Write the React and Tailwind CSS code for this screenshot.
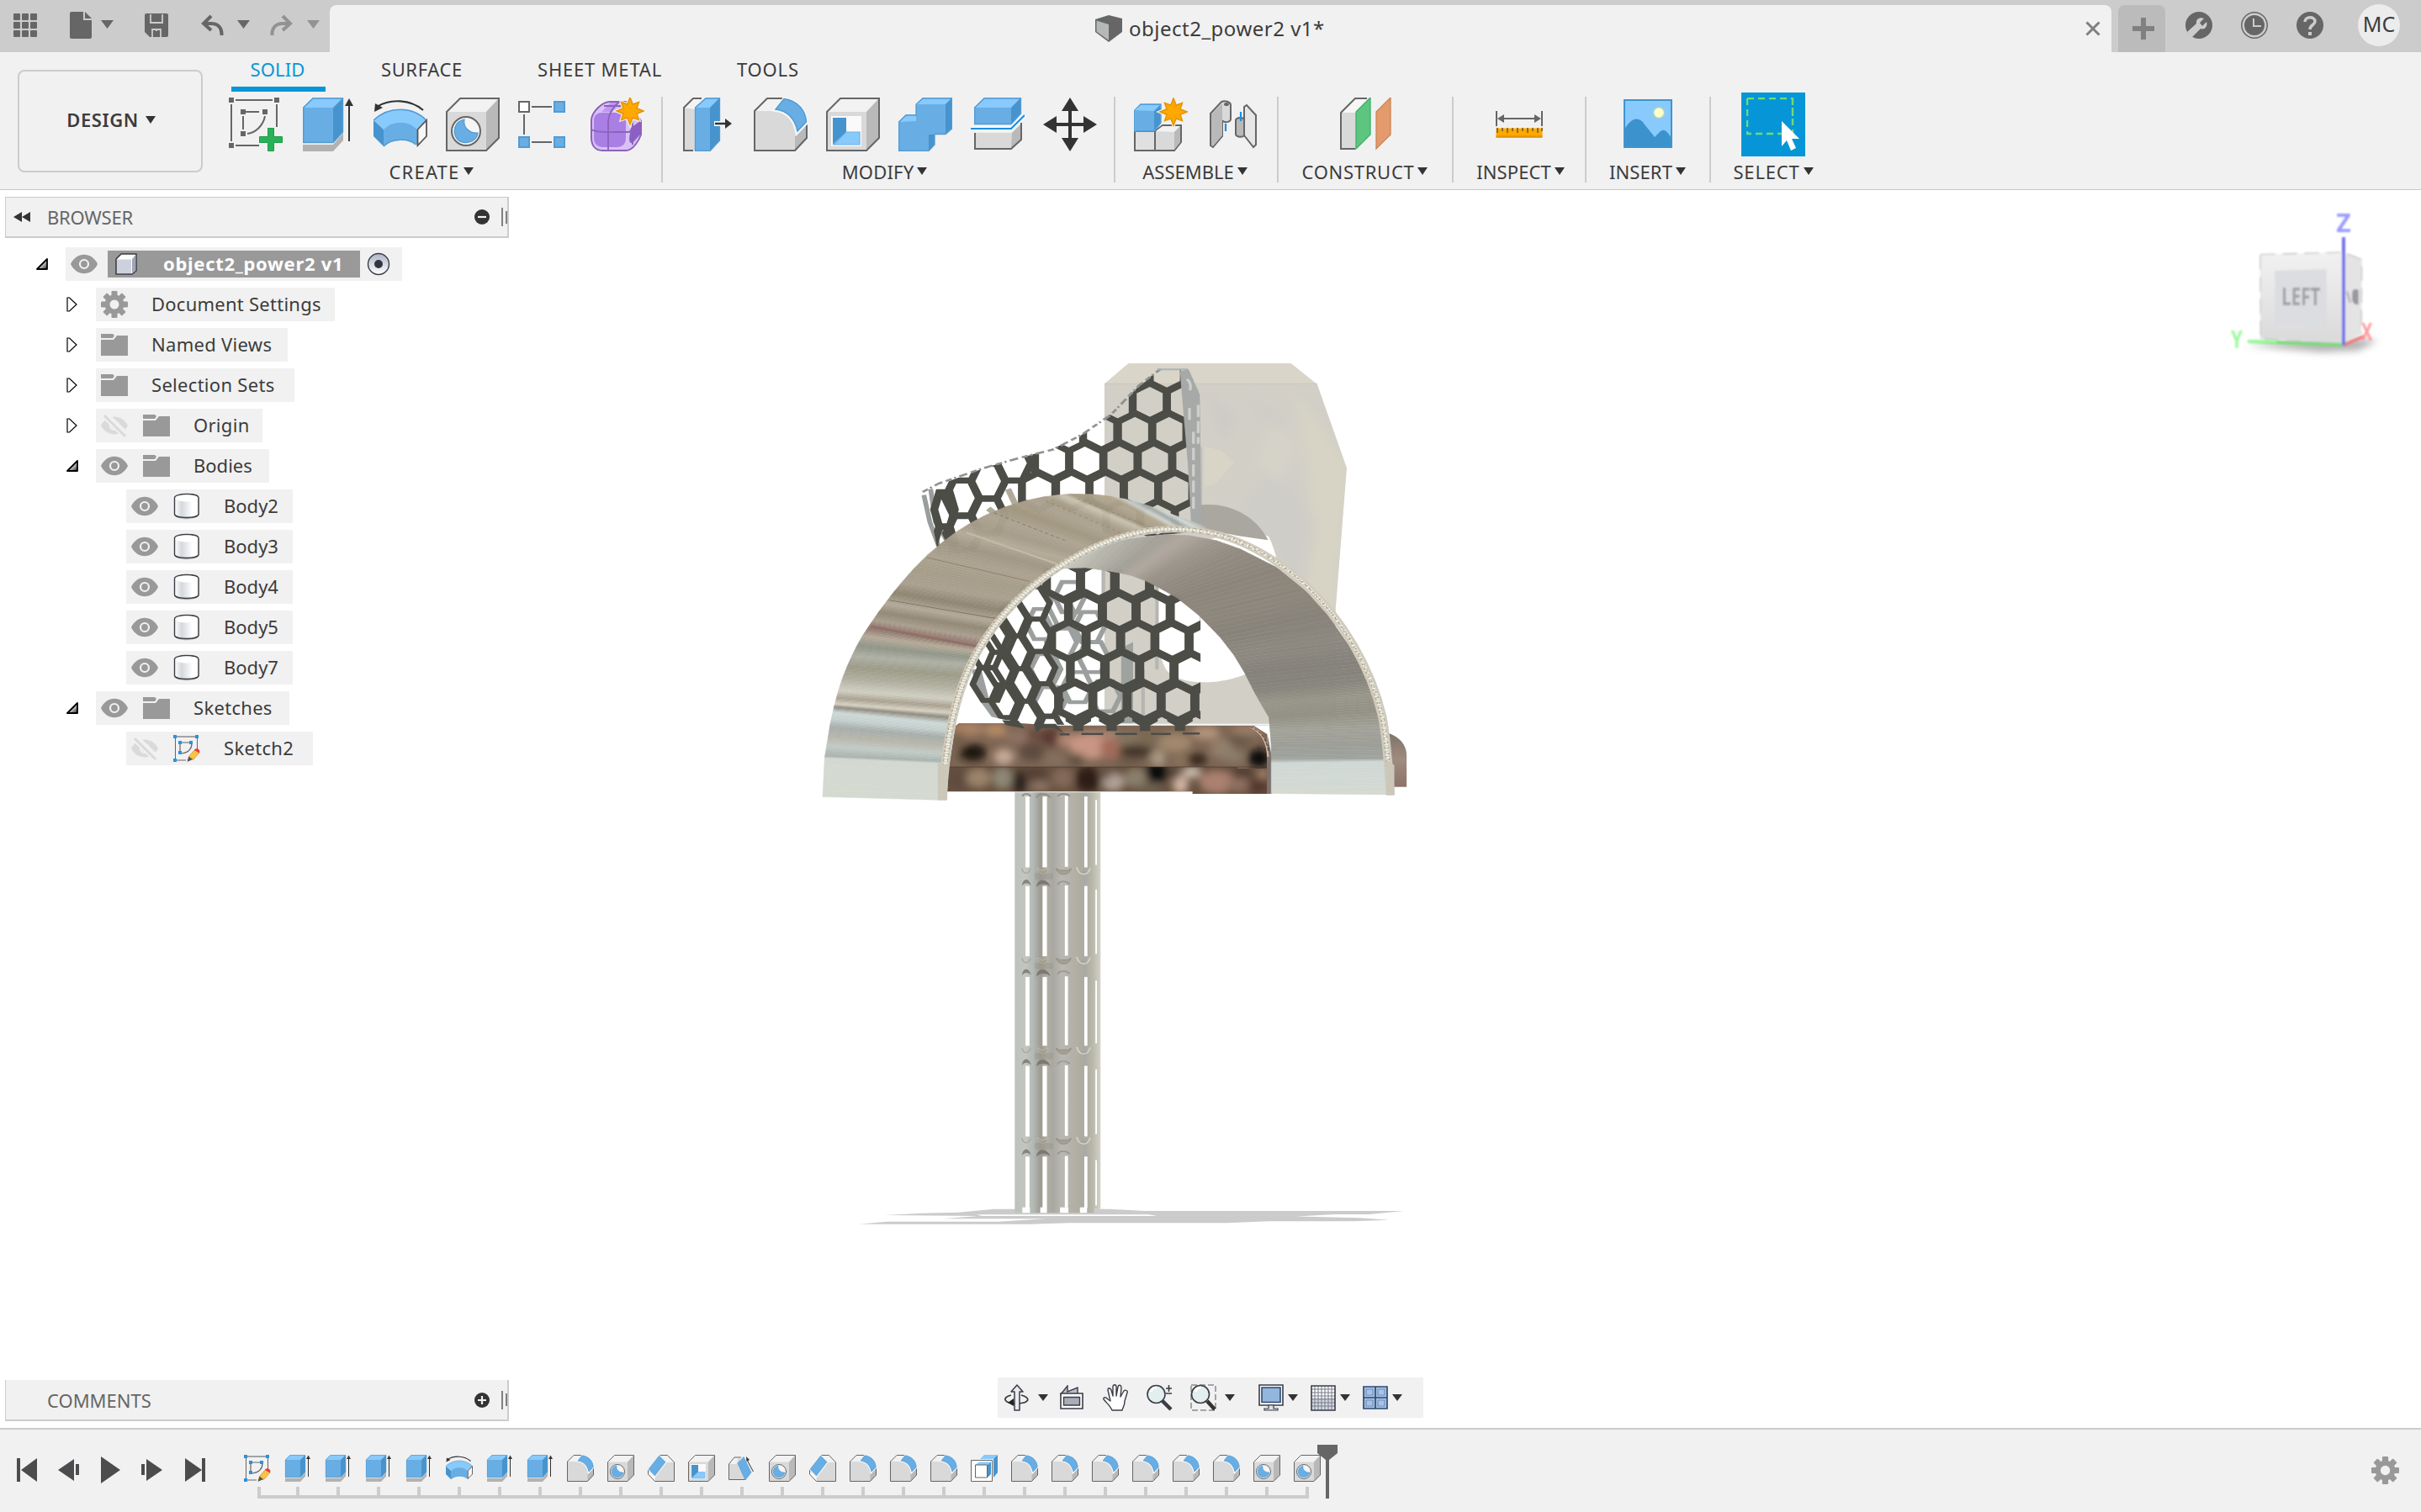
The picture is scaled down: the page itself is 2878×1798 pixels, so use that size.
import React from "react";

/* ---------- small shared pieces ---------- */

const Svg = ({ w = 64, h, vb, className = "", children }) => (
  <svg width={w} height={h ?? w} viewBox={vb ?? `0 0 ${w} ${h ?? w}`} className={"shrink-0 block " + className} fill="none">
    {children}
  </svg>
);

const Caret = ({ w = 12, h = 8, color = "#333", className = "" }) => (
  <svg width={w} height={h} viewBox="0 0 12 8" preserveAspectRatio="none" className={"shrink-0 block " + className}>
    <path d="M0 0H12L6 8Z" fill={color} />
  </svg>
);

const DARK = "#666";
const FRONT = "#d9d9d9";
const TOP = "#f2f2f2";
const SIDE = "#b9b9b9";

/* ---------- modelling icons, drawn on a 64 x 64 grid ---------- */

const Star = ({ x, y }) => (
  <g transform={`translate(${x} ${y})`}>
    <path d="M0-17 3.6-8.6 11-11 8.6-3.6 17 0 8.6 3.6 11 11 3.6 8.6 0 17-3.6 8.6-11 11-8.6 3.6-17 0-8.6-3.6-11-11-3.6-8.6Z" fill="#f1f1f1" stroke="#f1f1f1" strokeWidth="3" />
    <path d="M0-16 3.2-8 10.5-10.5 8-3.2 16 0 8 3.2 10.5 10.5 3.2 8 0 16-3.2 8-10.5 10.5-8 3.2-16 0-8-3.2-10.5-10.5-3.2-8Z" fill="#ffa800" stroke="#e59400" strokeWidth="1.5" />
  </g>
);

const SketchNew = () => (
  <>
    <g stroke={DARK} strokeWidth="2">
      <path d="M8 3H52M3 8V52M57 8V35M8 57H36M20 17H36M17 22V38" />
      <path d="M43 22C41 33 32 42 22 43" />
    </g>
    <path d="M0 0h6v6H0zM54 0h6v6h-6zM0 54h6v6H0zM14 14h6v6h-6zM40 14h6v6h-6zM14 40h6v6h-6z" fill={DARK} />
    <path d="M46.500 36.500h7v10h10v7h-10v10h-7v-10h-10v-7h10z" fill="#27b257" stroke="#1f9c49" />
  </>
);

const SketchEdit = () => (
  <>
    <path d="M6 4H52" stroke="#a3a3a3" strokeWidth="4" />
    <path d="M5 8V58M6 60H30M57 8V34" stroke={DARK} strokeWidth="2" />
    <path d="M20 18H42M16 20V42M44 20C44 34 34 42 20 44" stroke={DARK} strokeWidth="2.400" />
    <path d="M0 0h8v8H0zM52 0h8v8h-8zM0 56h8v8H0zM12 14h8v8h-8zM38 14h8v8h-8zM12 38h8v8h-8z" fill="#2394e6" />
    <path d="M34 60 38 50 52 34 62 42 48 58Z" fill="#fcc244" stroke="#c98f1f" strokeWidth="1.5" />
    <path d="M50 36C54 29 66 34 62 43Z" fill="#f4333a" />
    <path d="M33 64 37 51 46 58Z" fill="#555" />
  </>
);

const Extrude = () => (
  <>
    <path d="M2 56H38L50 42V51L38 64H2Z" fill="#b2b2b2" />
    <path d="M2 12 14 0H50L38 12V54H2Z" fill="#68aee5" />
    <path d="M2 12 14 0H50L38 12Z" fill="#88cafc" />
    <path d="M38 12 50 0V41L38 54Z" fill="#4793cd" />
    <path d="M2.700 12 14 1H49.500V41L38 53.500H2.700Z" stroke="#519bd3" strokeWidth="1.400" />
    <path d="M57 8V52" stroke="#333" strokeWidth="2" />
    <path d="M57 1 62 10H52Z" fill="#333" />
  </>
);

const Revolve = () => (
  <>
    <path d="M0 27C18 10 46 10 63 27L52 38C42 28 22 28 12 38Z" fill="#88cafc" />
    <path d="M0 27 12 38V58L0 46Z" fill="#4793cd" />
    <path d="M12 38C22 27 42 27 52 38V57C42 48 22 48 12 58Z" fill="#68aee5" />
    <path d="M0 27C18 10 46 10 63 27" stroke="#519bd3" strokeWidth="1.500" />
    <path d="M12 58C22 48 42 48 50 56" stroke="#519bd3" strokeWidth="1.500" />
    <path d="M52.500 38 63 27V46L52.500 57Z" fill="#f7f7f7" stroke="#555" strokeWidth="1.800" />
    <path d="M4 11C20 1 44 2 59 15" stroke="#333" strokeWidth="2.200" />
    <path d="M1 17 2 7 11 12Z" fill="#333" />
  </>
);

const Cube = () => (
  <>
    <path d="M1 17 17 1H63V48L48 63H1Z" fill={FRONT} />
    <path d="M1 17 17 1H63L48 17Z" fill={TOP} />
    <path d="M48 17 63 1V48L48 63Z" fill={SIDE} />
    <path d="M1 17 17 1H63V48L48 63H1Z" stroke={DARK} strokeWidth="2" />
  </>
);

const Hole = () => (
  <>
    <Cube />
    <circle cx="24" cy="40" r="17" fill="#f5f5f5" stroke={DARK} strokeWidth="2" />
    <path d="M22 26C10 28 7 42 14 50C22 57 37 53 38 42C28 43 20 35 22 26Z" fill="#68aee5" stroke="#4f9ad0" strokeWidth="1.200" />
  </>
);

const Pattern = () => (
  <>
    <path d="M16 11H40M7 20V44M16 53H40" stroke={DARK} strokeWidth="2" />
    <path d="M1 5h12v12H1z" stroke={DARK} strokeWidth="2" fill="#fff" />
    <path d="M43 5h12v12H43zM1 47h12v12H1zM43 47h12v12H43z" fill="#68aee5" stroke="#519bd3" strokeWidth="2" />
  </>
);

const Form = () => (
  <>
    <path d="M1 27C1 18 14 4 24 5H46L60 28V44C58 50 51 63 42 63H14C5 63 1 56 1 48Z" fill="#d9c1f7" stroke="#8c62b8" strokeWidth="2" />
    <path d="M13 17 24 6H34L27 17ZM30 17 37 7H45L43 17Z" fill="#bf95f7" />
    <path d="M48 36 59 28V44L50 54C47 55 46 52 46 48Z" fill="#8c5fc7" />
    <path d="M4 27C4 21 8 18 14 18H32C39 18 42 22 42 28V48C42 55 38 59 31 59H15C8 59 4 55 4 48Z" fill="#a97fe6" />
    <path d="M1 38C8 42 20 41 30 41H46L60 28M21 62V28C22 18 28 10 34 5M16 10H42M50 27V56" stroke="#8c62b8" strokeWidth="1.800" />
    <Star x={47} y={16} />
  </>
);

const PressPull = () => (
  <>
    <path d="M3 12 14 1H28L16 14V63H3Z" fill={FRONT} />
    <path d="M3 12 14 1H28L16 14Z" fill="#f4f4f4" />
    <path d="M14 63H3V12L14 1H24" stroke={DARK} strokeWidth="2" />
    <path d="M16 12 29 0H46V51L34 64H16Z" fill="#68aee5" />
    <path d="M16 12 29 0H46L34 12Z" fill="#88cafc" />
    <path d="M34 12 46 0V51L34 64Z" fill="#4793cd" />
    <path d="M16.500 12 29 1H45.500V51L34 63.300H16.500Z" stroke="#519bd3" strokeWidth="1.300" />
    <path d="M39 31H52" stroke="#f7f7f7" strokeWidth="6" />
    <path d="M40 31H55" stroke="#333" strokeWidth="2.500" />
    <path d="M52 25 60 31 52 37Z" fill="#333" />
  </>
);

const Fillet = () => (
  <>
    <path d="M1 63V16L16 1H36L25 15C42 17 50 32 51 45L63 31V48L49 63Z" fill={FRONT} />
    <path d="M1 16 16 1H34L24 16Z" fill={TOP} />
    <path d="M49 63V46L63 31V48Z" fill={SIDE} />
    <path d="M34 1H16L1 16V63H49L63 48V31" stroke={DARK} strokeWidth="2" />
    <path d="M24 15 36 1C54 3 63 17 63.500 30L51 43C49 28 42 17 24 15Z" fill="#68aee5" stroke="#f7f7f7" strokeWidth="3" />
    <path d="M26 14 36 1.500C54 4 62 17 62.500 29L52 40C49 26 41 16 26 14Z" fill="#68aee5" stroke="#519bd3" strokeWidth="1.400" />
  </>
);

const Chamfer = () => (
  <>
    <path d="M1 38 28 1H47L63 18V63H17L1 46Z" fill={FRONT} />
    <path d="M1 40V46L17 63V50Z" fill="#fafafa" />
    <path d="M28 1H47L63 18H43Z" fill={TOP} />
    <path d="M1 36V46L17 63H63V18L47 1H28" stroke={DARK} strokeWidth="2" />
    <path d="M1 34 27 1 44 17 17 52Z" fill="#68aee5" stroke="#f7f7f7" strokeWidth="3" />
    <path d="M2 34 27 2 42 17 17 50Z" fill="#68aee5" stroke="#519bd3" strokeWidth="1" />
  </>
);

const Shell = () => (
  <>
    <Cube />
    <path d="M6 22H42V58H6Z" fill="#fafafa" />
    <path d="M8 24H24V41L8 56Z" fill="#4793cd" />
    <path d="M9 56 24 41H40V56Z" fill="#88cafc" stroke="#6cb1e6" strokeWidth="1.200" />
  </>
);

const Combine = () => (
  <>
    <path d="M0 29 9 20H21V8L29 0H64V37L56 44H43V56L36 64H0Z" fill="#68aee5" />
    <path d="M21 8 29 0H64L56 8ZM0 29 9 20H21V28Z" fill="#88cafc" />
    <path d="M56 8 64 0V37L56 44ZM36 64V44H43V56Z" fill="#4793cd" />
    <path d="M.7 29 9 21H21V8L29 1H63.300V37L56 43.500H43V56L36 63.300H.7Z" stroke="#519bd3" strokeWidth="1.300" />
  </>
);

const Split = () => (
  <>
    <path d="M5 42H49L60 31V50L48 61H5Z" fill={FRONT} />
    <path d="M49 42 60 31V50L48 61Z" fill={SIDE} />
    <path d="M5 42V61H48L60 50V30" stroke={DARK} strokeWidth="2" />
    <path d="M4 12 16 0H60V19L48 32H4Z" fill="#68aee5" />
    <path d="M4 12 16 0H60L48 12Z" fill="#88cafc" />
    <path d="M48 12 60 0V19L48 32Z" fill="#4793cd" />
    <path d="M4.700 12 16 1H59.500V19L48 31.500H4.700Z" stroke="#519bd3" strokeWidth="1.300" />
    <path d="M0 37H48L64 21" stroke="#f7f7f7" strokeWidth="6" />
    <path d="M0 37H48L64 21" stroke="#1b8fe6" strokeWidth="2.200" />
  </>
);

const Move = () => (
  <>
    <path d="M32 10V54M10 32H54" stroke="#333" strokeWidth="4" />
    <path d="M32 0 42 16H22ZM32 64 42 48H22ZM0 32 16 22V42ZM64 32 48 22V42Z" fill="#333" />
  </>
);

const Assemble = () => (
  <>
    <path d="M1 40H25V63H1Z" fill="#e0e0e0" stroke={DARK} strokeWidth="2" />
    <path d="M25 40 34 33H56V53L48 63H25Z" fill={FRONT} stroke={DARK} strokeWidth="2" />
    <path d="M26 40 34 34H55L48 41Z" fill={TOP} />
    <path d="M48 41 55 34V53L48 62Z" fill={SIDE} />
    <path d="M0 16 8 8H32V30L24 40H0Z" fill="#68aee5" stroke="#519bd3" strokeWidth="1.400" />
    <path d="M1 15 8 9H31L24 16Z" fill="#88cafc" />
    <path d="M24 16 31 9V30L24 39Z" fill="#4793cd" />
    <Star x={47} y={17} />
  </>
);

const Joint = () => (
  <>
    <path d="M5 19 18 5C22 3 29 5 29 9V26C28 30 20 30 19 27V46L8 59 5 57Z" fill={FRONT} stroke={DARK} strokeWidth="2" />
    <path d="M6 20 19 7V45L8 58 6 56Z" fill={SIDE} />
    <ellipse cx="24" cy="8" rx="3" ry="2" fill={DARK} />
    <path d="M23 31V40" stroke="#1b8fe6" strokeWidth="2.200" />
    <path d="M45 11 48 9 59 21V56L56 59 45 45Z" fill="#e6e6e6" stroke={DARK} strokeWidth="2" />
    <path d="M35 27C36 23 45 23 45 27V45C43 48 36 47 35 44Z" fill={SIDE} stroke={DARK} strokeWidth="2" />
    <path d="M41 17V28" stroke="#1b8fe6" strokeWidth="2.200" />
  </>
);

const Construct = () => (
  <>
    <path d="M3 18 20 1H38L21 18V61H3Z" fill={FRONT} />
    <path d="M3 18 20 1H38L21 18Z" fill="#f6f6f6" />
    <path d="M20 61H3V18L20 1H34" stroke={DARK} strokeWidth="2" />
    <path d="M21 17 38 0V44L21 61Z" fill="#5cc680" stroke="#3fae67" strokeWidth="1.300" />
    <path d="M45 17 62 0V44L45 61Z" fill="#e39a6c" stroke="#cd8453" strokeWidth="1.300" />
  </>
);

const Measure = () => (
  <>
    <path d="M5 16V34M59 16V34M10 25H54" stroke={DARK} strokeWidth="2" />
    <path d="M6 25 14 20V30ZM58 25 50 20V30Z" fill={DARK} />
    <path d="M4.500 36.500h55v11h-55z" fill="#ffa800" />
    <path d="M4.500 46.500h55" stroke="#e59400" strokeWidth="2.500" />
    <path d="M6 36v6M12 36v4M18 36v6M24 36v4M30 36v6M36 36v4M42 36v6M48 36v4M54 36v6M59 36v4" stroke="#7a5c1c" strokeWidth="1.600" />
  </>
);

const Picture = () => (
  <>
    <path d="M3 3H61V60H3Z" fill="#88cafc" />
    <circle cx="45" cy="18" r="6.500" fill="#ffffc9" stroke="#a8d4c8" strokeWidth="1.600" />
    <path d="M3 40C10 26 20 20 28 32L40 47 46 41C51 36 55 40 61 50V60H3Z" fill="#3c92cd" />
    <path d="M4 3H60V59H4Z" stroke="#3f95cf" strokeWidth="2" />
  </>
);

const Draft = () => (
  <>
    <path d="M1 22 14 6H26L40 59H1Z" fill={FRONT} />
    <path d="M1 22 14 6H24L19 22Z" fill={TOP} />
    <path d="M40 59H1V22L14 6H30" stroke={DARK} strokeWidth="2" />
    <path d="M22 20 36 5 54 42 40 60Z" fill="#68aee5" stroke="#519bd3" strokeWidth="1.400" />
    <path d="M45 14 59 40" stroke="#333" strokeWidth="2" />
    <path d="M42 4 50 12 43 16Z" fill="#333" />
  </>
);

const OffsetFaces = () => (
  <>
    <path d="M22 10 32 0H64L54 10Z" fill="#88cafc" />
    <path d="M54 10 64 0V42L54 54Z" fill="#4793cd" />
    <path d="M1 13H51V63H1Z" fill="#fff" stroke={DARK} strokeWidth="2" />
    <path d="M11 24 20 17H48L40 24Z" fill="#88cafc" />
    <path d="M40 24 48 17V46L40 54Z" fill="#4793cd" />
    <path d="M11 24H39V54H11Z" fill="#fff" stroke={DARK} strokeWidth="2" />
  </>
);

const Tool = ({ icon: I }) => (
  <Svg>
    <I />
  </Svg>
);

/* ---------- title bar ---------- */

function TitleBar() {
  return (
    <div className="flex h-[62px] bg-[#cccccc] shrink-0">
      <div className="flex w-[392px] items-start">
        <Svg w={28} h={28} className="ml-4 mt-4">
          {[0, 10, 20].map((y) => [0, 10, 20].map((x) => <rect key={x + "-" + y} x={x} y={y} width="8" height="8" rx="1" fill="#666" />))}
        </Svg>
        <Svg w={26} h={32} className="ml-[39px] mt-[14px]">
          <path d="M2 0H16V10H26V30a2 2 0 0 1-2 2H2a2 2 0 0 1-2-2V2a2 2 0 0 1 2-2Z" fill="#666" />
          <path d="M18 0 26 8H18Z" fill="#666" />
        </Svg>
        <Caret w={15} h={10} color="#666" className="ml-[11px] mt-6" />
        <Svg w={28} h={28} className="ml-[37px] mt-4">
          <path d="M2 0H26a2 2 0 0 1 2 2V26a2 2 0 0 1-2 2H6L0 22V2a2 2 0 0 1 2-2Z" fill="#666" />
          <path d="M7 1V11H21V1M9 28V19H19V28M14 20V27" stroke="#ccc" strokeWidth="1.800" />
          <path d="M10 2h8v7h-8zM12 21h4v7h-4z" fill="#666" />
        </Svg>
        <Svg w={27} h={26} className="ml-[39px] mt-[17px]">
          <path d="M12 2 3 11 12 19M4 11H12C21 11 25 17 24.500 25" stroke="#666" strokeWidth="4" />
        </Svg>
        <Caret w={15} h={10} color="#666" className="ml-[16px] mt-6" />
        <Svg w={27} h={26} className="ml-[24px] mt-[17px]">
          <path d="M15 2 24 11 15 19M23 11H15C6 11 2 17 2.500 25" stroke="#929292" strokeWidth="4" />
        </Svg>
        <Caret w={15} h={10} color="#929292" className="ml-[17px] mt-6" />
      </div>
      <div className="flex w-[2118px] mt-[6px] h-14 rounded-t-[8px] bg-[#f1f1f1] items-center">
        <Svg w={33} h={32} className="ml-[910px]">
          <path d="M0 5 16 0 32 4V20L16 32 0 20Z" fill="#666" />
          <path d="M1.500 6.500 16 11V30L1.500 19.500Z" fill="#b4b8b8" />
        </Svg>
        <span className="ml-[7px] text-[24px] leading-[28px] tracking-[0.5px] w-[239px] whitespace-nowrap">object2_power2 v1*</span>
        <Svg w={18} h={18} className="ml-[898px]">
          <path d="M1.500 1.500 16.500 16.500M16.500 1.500 1.500 16.500" stroke="#808080" strokeWidth="3" />
        </Svg>
      </div>
      <div className="ml-2 mt-[6px] flex h-14 w-14 items-center justify-center rounded-t-[8px] bg-[#bbbbbb]">
        <Svg w={26} h={26} className="ml-1">
          <path d="M13 0V26M0 13H26" stroke="#808080" strokeWidth="6" />
        </Svg>
      </div>
      <div className="flex items-center h-[60px] ml-6">
        <Svg w={32} h={32}>
          <circle cx="16" cy="16" r="16" fill="#666" />
          <path d="M7 32 2 24 13 14C12 9 17 6 22 8L17 13 20 17 25 12C27 18 22 22 18 20L8 30Z" fill="#ccc" />
        </Svg>
        <Svg w={32} h={32} className="ml-[34px]">
          <circle cx="16" cy="16" r="15.200" stroke="#666" strokeWidth="1.500" />
          <circle cx="16" cy="16" r="12" fill="#666" />
          <path d="M15 8V17H24" stroke="#ccc" strokeWidth="2" />
        </Svg>
        <Svg w={32} h={32} className="ml-[34px]">
          <circle cx="16" cy="16" r="16" fill="#666" />
          <path d="M10 12C10 5 22 5 22 11.500C22 16 16 15 16 21" stroke="#ccc" strokeWidth="3.500" />
          <path d="M14 24h4v4h-4z" fill="#ccc" />
        </Svg>
        <div className="ml-[41px] flex h-[50px] w-[50px] items-center justify-center rounded-full bg-[#ececec] pb-[2px] text-[25px]">MC</div>
      </div>
    </div>
  );
}

/* ---------- ribbon ---------- */

const GROUPS = [
  { label: "CREATE", w: "w-[545px]", track: "tracking-[1.2px]", row: "pl-[10px]", lab: "pr-[2px]", icons: [SketchNew, Extrude, Revolve, Hole, Pattern, Form] },
  { label: "MODIFY", w: "w-[538px]", track: "tracking-[0.2px]", row: "pl-[4px]", lab: "pr-[7px]", icons: [PressPull, Fillet, Shell, Combine, Split, Move] },
  { label: "ASSEMBLE", w: "w-[194px]", track: "tracking-[0px]", row: "pl-[4px]", lab: "pr-[1px]", icons: [Assemble, Joint] },
  { label: "CONSTRUCT", w: "w-[208px]", track: "tracking-[0.7px]", row: "pl-[2px]", lab: "pl-[1px]", icons: [Construct] },
  { label: "INSPECT", w: "w-[158px]", track: "tracking-[0.1px]", row: "pl-[2px]", lab: "pl-[5px]", icons: [Measure] },
  { label: "INSERT", w: "w-[148px]", track: "tracking-[0.1px]", row: "pl-[2px]", lab: "pl-[1px]", icons: [Picture] },
];

const GroupLabel = ({ text, track, lab }) => (
  <div className={"mt-[10px] flex h-7 items-center justify-center " + lab}>
    <span className={"text-[22px] leading-7 whitespace-nowrap " + track}>{text}</span>
    <Caret w={12} h={9} className="ml-1 mb-[2px]" />
  </div>
);

function Ribbon() {
  return (
    <div className="flex h-[164px] shrink-0 border-b border-[#c8c8c8] bg-[#f1f1f1]">
      <button className="ml-[21px] mt-[21px] flex h-[122px] w-[220px] items-center justify-center rounded-[8px] border-2 border-[#cccccc] pb-[3px] pl-[2px]">
        <span className="text-[22px] font-semibold tracking-[0.6px]">DESIGN</span>
        <Caret w={12} h={9} className="ml-[8px]" />
      </button>
      <div className="flex flex-col">
        <div className="flex h-[47px] items-end whitespace-nowrap text-[22px] leading-[28px]">
          <div className="ml-[34px] flex h-[47px] w-[112px] flex-col items-center justify-end border-b-[6px] border-[#0696d7] pb-[7px] pr-[2px] text-[#0696d7] tracking-[0.1px]">SOLID</div>
          <div className="ml-[66px] h-[41px] w-[98px] tracking-[0.6px]">SURFACE</div>
          <div className="ml-[88px] h-[41px] w-[150px] tracking-[0.8px]">SHEET METAL</div>
          <div className="ml-[87px] h-[41px] tracking-[0.8px]">TOOLS</div>
        </div>
        <div className="flex">
          {GROUPS.map((g) => (
            <div key={g.label} className={"flex h-[109px] flex-col pt-[7px] " + g.w}>
              <div className={"flex justify-center gap-[22px] " + g.row}>
                {g.icons.map((I, i) => (
                  <Tool key={i} icon={I} />
                ))}
              </div>
              <GroupLabel text={g.label} track={g.track} lab={g.lab} />
            </div>
          )).reduce((out, el, i) => {
            out.push(el, <div key={"s" + i} className="-mr-[2px] mt-[6px] h-[102px] w-[2px] bg-[#cccccc]" />);
            return out;
          }, [])}
          <div className="flex h-[109px] w-[152px] flex-col items-center pt-[1px]">
            <div className="flex h-[76px] w-[76px] items-center justify-center bg-[#0696d7]">
              <Svg>
                <path d="M1 1H55V43H44M1 1V43H44M55 1V30" stroke="#6fdc74" strokeWidth="2.400" strokeDasharray="8 5" />
                <path d="M42 28V58L48 51 53 63 59 60 54 49H63Z" fill="#fff" />
              </Svg>
            </div>
            <div className="-mt-[6px]">
              <GroupLabel text="SELECT" track="tracking-[0.8px]" lab="" />
            </div>
          </div>
        </div>
      </div>
    </div>
  );
}

/* ---------- browser tree ---------- */

const Eye = () => (
  <Svg w={32} h={24}>
    <path d="M0 12C7-3 25-3 32 12C25 27 7 27 0 12Z" fill="#999" />
    <circle cx="16" cy="12" r="5" fill="#999" stroke="#f1f1f1" strokeWidth="2.200" />
  </Svg>
);
const EyeOff = () => (
  <Svg w={32} h={30}>
    <path d="M0 15C7 1 25 1 32 15C25 29 7 29 0 15Z" fill="#dadada" />
    <circle cx="16" cy="15" r="5" fill="#dadada" stroke="#f1f1f1" strokeWidth="2.200" />
    <path d="M2 0 31 28" stroke="#f1f1f1" strokeWidth="9" />
    <path d="M4 3 29 28" stroke="#dadada" strokeWidth="3" />
  </Svg>
);
const Folder = () => (
  <Svg w={32} h={26}>
    <path d="M0 0H14L16 2 14 5H0Z" fill="#999" />
    <path d="M0 7H15L19 2H32V26H0Z" fill="#999" />
  </Svg>
);
const Gear = ({ size = 32 }) => (
  <Svg w={size} vb="0 0 32 32">
    {[0, 45, 90, 135].map((a) => (
      <rect key={a} x="12.500" y="0" width="7" height="32" rx="1" fill="#999" transform={`rotate(${a} 16 16)`} />
    ))}
    <circle cx="16" cy="16" r="11.500" fill="#999" />
    <circle cx="16" cy="16" r="5.500" fill="#f1f1f1" />
  </Svg>
);
const Cylinder = () => (
  <Svg w={32} h={32}>
    <defs>
      <linearGradient id="cyl" x1="0" x2="1" y1="0" y2="0">
        <stop offset="0" stopColor="#fff" />
        <stop offset=".3" stopColor="#d5d8dc" />
        <stop offset=".75" stopColor="#fff" />
      </linearGradient>
    </defs>
    <path d="M1 6V26C4 33 27 33 31 26V6" fill="#bbb" />
    <path d="M1.500 6C1.500 0 30 0 30 6V25C30 31 1.500 31 1.500 25Z" fill="url(#cyl)" stroke="#3b3d45" strokeWidth="1.400" />
    <ellipse cx="15.800" cy="6.500" rx="13" ry="4" fill="#fff" />
  </Svg>
);
const Component3d = () => (
  <Svg w={28} h={28}>
    <path d="M2 8 8 2H26V22L21 26H2Z" fill="#fff" stroke="#3b3d45" strokeWidth="1.600" strokeLinejoin="round" />
    <path d="M3 8.500H20V25H3Z" fill="#cdd1dd" />
    <path d="M21 8 25.300 3V21.500L21 25Z" fill="#9fa5b5" />
  </Svg>
);
const SketchIcon = () => (
  <Svg w={32} h={32} vb="0 0 64 64">
    <SketchEdit />
  </Svg>
);

const Expander = ({ open }) =>
  open ? (
    <Svg w={14} h={14}>
      <defs>
        <linearGradient id="exp" x1="0" x2="1" y1="0" y2="1">
          <stop offset=".4" stopColor="#fff" />
          <stop offset="1" stopColor="#222" />
        </linearGradient>
      </defs>
      <path d="M1 13H13V1Z" fill="url(#exp)" stroke="#000" strokeWidth="1.800" strokeLinejoin="round" />
    </Svg>
  ) : (
    <Svg w={13} h={18}>
      <path d="M1 1H3.500L12 9 3.500 17H1Z" stroke="#000" strokeWidth="1.200" fill="#fff" />
    </Svg>
  );

const NODES = [
  { t: "Document Settings", l: 1, e: false, icon: Gear, w: "w-[284px]", k: "tracking-[0.25px]" },
  { t: "Named Views", l: 1, e: false, icon: Folder, w: "w-[228px]", k: "tracking-[0.3px]" },
  { t: "Selection Sets", l: 1, e: false, icon: Folder, w: "w-[236px]", k: "tracking-[0.3px]" },
  { t: "Origin", l: 1, e: false, eye: "off", icon: Folder, w: "w-[198px]", k: "tracking-[0.3px]" },
  { t: "Bodies", l: 1, e: true, eye: "on", icon: Folder, w: "w-[206px]", k: "tracking-[0px]" },
  { t: "Body2", l: 2, eye: "on", icon: Cylinder, w: "w-[198px]", k: "" },
  { t: "Body3", l: 2, eye: "on", icon: Cylinder, w: "w-[198px]", k: "" },
  { t: "Body4", l: 2, eye: "on", icon: Cylinder, w: "w-[198px]", k: "" },
  { t: "Body5", l: 2, eye: "on", icon: Cylinder, w: "w-[198px]", k: "" },
  { t: "Body7", l: 2, eye: "on", icon: Cylinder, w: "w-[198px]", k: "" },
  { t: "Sketches", l: 1, e: true, eye: "on", icon: Folder, w: "w-[230px]", k: "tracking-[0.3px]" },
  { t: "Sketch2", l: 2, eye: "off", icon: SketchIcon, w: "w-[222px]", k: "tracking-[0.3px]" },
];

const Grip = () => (
  <div className="flex h-[22px] items-center gap-[3px]">
    <div className="h-[22px] w-[2px] bg-[#808080]" />
    <div className="h-[15px] w-[2px] bg-[#808080]" />
  </div>
);

const PanelBar = ({ title, track, rewind, plus }) => (
  <div className={"flex h-[49px] w-[599px] items-center border-r-2 border-b-2 border-l border-[#cccccc] bg-[#f1f1f1] " + (plus ? "" : "border-t")}>
    <div className="w-[49px] pl-[9px]">
      {rewind && (
        <Svg w={20} h={12}>
          <path d="M10 0V12L0 6ZM20 0V12L10 6Z" fill="#333" />
        </Svg>
      )}
    </div>
    <span className={"w-[508px] text-[22px] leading-7 text-[#666666] " + track}>{title}</span>
    <Svg w={18} h={18}>
      <circle cx="9" cy="9" r="9" fill="#333" />
      <path d={plus ? "M4 9H14M9 4V14" : "M4 9H14"} stroke="#f1f1f1" strokeWidth="2.200" />
    </Svg>
    <div className="ml-[14px]">
      <Grip />
    </div>
  </div>
);

function Browser() {
  return (
    <div className="relative ml-[6px] mt-[8px] flex w-[599px] flex-col">
      <PanelBar title="BROWSER" track="-tracking-[0.2px]" rewind />
      <div className="mt-[11px] flex flex-col gap-2">
        <div className="flex h-10 items-center pl-9">
          <div className="w-9 pl-[1px]">
            <Expander open />
          </div>
          <div className="flex h-10 w-[400px] items-center bg-[#f1f1f1] pl-[6px]">
            <Eye />
            <div className="ml-3 flex h-8 w-[300px] items-center bg-[#999999] pl-2">
              <Component3d />
              <span className="mb-[2px] ml-[30px] whitespace-nowrap text-[22px] font-bold leading-[30px] tracking-[0.7px] text-white">object2_power2 v1</span>
            </div>
            <Svg w={28} h={28} className="ml-2">
              <defs>
                <linearGradient id="radio" x1="0" x2="0" y1="0" y2="1">
                  <stop offset="0" stopColor="#aeb5c8" />
                  <stop offset="1" stopColor="#fff" />
                </linearGradient>
              </defs>
              <circle cx="14" cy="14" r="12.500" fill="url(#radio)" stroke="#3b3d45" strokeWidth="1.400" />
              <circle cx="14" cy="14" r="5" fill="#33363f" />
            </Svg>
          </div>
        </div>
        {NODES.map((n) => (
          <div key={n.t} className={"flex h-10 items-center " + (n.l === 1 ? "pl-[72px]" : "pl-[108px]")}>
            <div className="w-9 pl-[1px]">{n.e !== undefined && <Expander open={n.e} />}</div>
            <div className={"flex h-10 items-center bg-[#f1f1f1] pl-[6px] " + n.w}>
              {n.eye && <div className="mr-[18px]">{n.eye === "on" ? <Eye /> : <EyeOff />}</div>}
              <n.icon />
              <span className={"mb-[2px] ml-[28px] whitespace-nowrap text-[22px] leading-[38px] " + n.k}>{n.t}</span>
            </div>
          </div>
        ))}
      </div>
    </div>
  );
}

/* ---------- 3D scene ---------- */

const lerp = (a, b, t) => a + (b - a) * t;
const mix = (c1, c2, t) =>
  "#" + [0, 1, 2].map((i) => Math.round(lerp(parseInt(c1.substr(1 + i * 2, 2), 16), parseInt(c2.substr(1 + i * 2, 2), 16), t)).toString(16).padStart(2, "0")).join("");

/* Each station: outer x,y, inner x,y, surface colour. */
const OUTER_SHELL = [
  [38, 1505, 340, 1516, "#d5dad1"],
  [43, 1375, 340, 1394, "#d3d8d1"],
  [44, 1368, 340, 1386, "#a9b2ae"],
  [48, 1335, 345, 1362, "#c2cbc6"],
  [52, 1305, 348, 1335, "#b7b6ab"],
  [56, 1270, 352, 1305, "#a6adab"],
  [60, 1245, 355, 1285, "#c4cfcd"],
  [64, 1222, 358, 1262, "#cdd8d6"],
  [67, 1205, 360, 1240, "#8d887b"],
  [69, 1195, 362, 1225, "#d7d1c3"],
  [73, 1175, 366, 1205, "#a89f8e"],
  [78, 1150, 370, 1180, "#d0cfc2"],
  [88, 1110, 380, 1140, "#b0af9f"],
  [100, 1070, 390, 1100, "#9c9a88"],
  [112, 1035, 400, 1065, "#aeb0a4"],
  [125, 1000, 412, 1040, "#8f9486"],
  [139, 968, 422, 1018, "#b5aa99"],
  [151, 944, 430, 1004, "#8f7b70"],
  [158, 930, 436, 992, "#997f77"],
  [166, 915, 442, 975, "#a79d8d"],
  [179, 890, 455, 945, "#8f8674"],
  [196, 860, 470, 920, "#b4a999"],
  [216, 825, 490, 885, "#8d8471"],
  [238, 790, 515, 850, "#a9a08e"],
  [268, 745, 550, 812, "#a59c88"],
  [302, 700, 585, 775, "#aca290"],
  [345, 652, 620, 745, "#9f9683"],
  [375, 623, 650, 715, "#b3aa97"],
  [410, 594, 675, 695, "#a59b88"],
  [450, 566, 710, 675, "#ada492"],
  [500, 539, 745, 655, "#a0967f"],
  [550, 519, 780, 640, "#aca290"],
  [595, 506, 815, 628, "#a99f8b"],
  [640, 499, 850, 615, "#cbc3b1"],
  [665, 497, 865, 612, "#a1977f"],
  [720, 498, 890, 610, "#aea38e"],
  [760, 504, 910, 608, "#b5a68c"],
  [800, 514, 930, 607, "#cfd7d5"],
  [850, 532, 950, 607, "#a3a8a3"],
  [900, 556, 975, 607, "#d3dcda"],
  [1000, 604, 1005, 612, "#b8b6aa"],
];

const INNER_SHELL = [
  [640, 745, 690, 700, "#c9c8bf"],
  [700, 742, 760, 655, "#b9b8ae"],
  [780, 758, 900, 632, "#a3a098"],
  [815, 768, 960, 635, "#b0a89f"],
  [850, 785, 1030, 652, "#9b948a"],
  [880, 805, 1090, 680, "#928b81"],
  [930, 842, 1180, 740, "#8b857b"],
  [985, 900, 1255, 820, "#8d877c"],
  [1040, 975, 1310, 900, "#87837a"],
  [1075, 1035, 1355, 985, "#8e8a81"],
  [1100, 1090, 1390, 1050, "#85827b"],
  [1125, 1155, 1420, 1120, "#89867e"],
  [1142, 1195, 1440, 1165, "#99968a"],
  [1162, 1240, 1450, 1215, "#929084"],
  [1165, 1285, 1458, 1275, "#a2a299"],
  [1168, 1340, 1463, 1335, "#9c9e98"],
  [1168, 1380, 1466, 1378, "#9fa29d"],
  [1168, 1395, 1467, 1388, "#d0d8d5"],
  [1168, 1440, 1468, 1440, "#d0d9d5"],
  [1168, 1494, 1470, 1498, "#d5d9d1"],
];

const Ruled = ({ rows, steps = 6 }) => {
  const out = [];
  for (let i = 0; i < rows.length - 1; i++) {
    const a = rows[i];
    const b = rows[i + 1];
    for (let s = 0; s < steps; s++) {
      const t0 = s / steps;
      const t1 = (s + 1) / steps;
      const p = (k, t) => lerp(a[k], b[k], t).toFixed(1);
      const c = mix(a[4], b[4], (t0 + t1) / 2);
      out.push(
        <path key={i + "-" + s} d={`M${p(0, t0)} ${p(1, t0)}L${p(2, t0)} ${p(3, t0)}L${p(2, t1)} ${p(3, t1)}L${p(0, t1)} ${p(1, t1)}Z`} fill={c} stroke={c} strokeWidth="1.200" />
      );
    }
  }
  return <>{out}</>;
};

const pointy = (x, y) => `M${x} ${y - 62}L${x + 43} ${y - 34}V${y + 34}L${x} ${y + 62}L${x - 43} ${y + 34}V${y - 34}Z`;
const flat = (x, y, w, h, k = 0) => `M${x - w / 2} ${y - h}H${x + w / 2}L${x + w + k} ${y}L${x + w / 2 + k} ${y + h}H${x - w / 2 + k}L${x - w} ${y}Z`;

const UPPER = [
  [905, 92], [862, 190], [948, 190], [737, 290], [825, 290], [911, 290],
  [616, 388], [702, 387], [788, 387], [875, 387], [962, 387],
  [583, 487], [667, 485], [753, 485], [840, 485], [926, 487], [795, 582], [882, 582], [968, 585],
];
const LOWER = [
  [645, 787], [730, 787], [818, 787], [905, 790], [700, 887], [785, 887], [870, 887], [957, 890],
  [658, 985], [745, 985], [832, 987], [918, 987], [1004, 989], [705, 1083], [793, 1083], [880, 1085], [966, 1090],
  [675, 1185], [762, 1185], [848, 1187], [933, 1189], [1018, 1190],
  [725, 1286], [808, 1286], [892, 1288], [978, 1288],
];

const BLOBS = [
  [90, 80, 60, 26, "#a98265"], [190, 85, 40, 24, "#b58a66"], [110, 165, 48, 30, "#1c1211"], [60, 120, 26, 30, "#75604e"],
  [220, 180, 36, 30, "#c4a996"], [270, 110, 50, 22, "#8f7263"], [320, 160, 45, 34, "#5e4b40"], [330, 100, 30, 20, "#6a4a40"],
  [390, 110, 40, 32, "#5a3a30"], [400, 190, 38, 22, "#85705e"], [450, 120, 40, 26, "#b18773"], [530, 140, 75, 48, "#c89683"],
  [480, 190, 30, 22, "#5f5142"], [600, 150, 36, 40, "#a36c5c"], [590, 100, 40, 16, "#aa8675"], [670, 120, 50, 26, "#84745f"],
  [690, 160, 60, 24, "#443629"], [660, 200, 50, 16, "#6d5b49"], [770, 185, 26, 30, "#ac9a84"], [740, 120, 45, 24, "#7a6a55"],
  [830, 130, 60, 35, "#a1886c"], [850, 195, 30, 18, "#8c735c"], [910, 190, 36, 22, "#35281f"], [940, 95, 50, 26, "#b0937a"],
  [1000, 150, 45, 35, "#93806b"], [1060, 120, 40, 26, "#6b5a49"], [1040, 180, 40, 22, "#8a7c69"], [1130, 185, 40, 34, "#0e0b0a"],
  [1090, 85, 60, 18, "#9c7f69"], [60, 260, 40, 30, "#5f4c3f"], [130, 255, 44, 36, "#9b826b"], [215, 255, 36, 40, "#8f8776"],
  [275, 270, 26, 40, "#2c201b"], [330, 240, 44, 22, "#544036"], [350, 285, 36, 18, "#8f7767"], [430, 255, 40, 36, "#84695a"],
  [520, 260, 46, 46, "#2d1d18"], [610, 270, 40, 34, "#afa096"], [580, 240, 24, 20, "#66554a"], [690, 255, 40, 36, "#8b7f6c"],
  [765, 235, 40, 38, "#0e0e0b"], [740, 290, 50, 16, "#6f6452"], [850, 280, 28, 34, "#d2b4a2"], [890, 235, 34, 22, "#c8baaa"],
  [825, 240, 20, 24, "#55453a"], [980, 270, 64, 42, "#aa806f"], [1070, 240, 36, 22, "#4f3c33"], [1060, 280, 44, 26, "#8f6f60"],
  [1125, 285, 36, 26, "#54392f"], [1145, 240, 20, 16, "#b38b74"],
];

const Marble = () => (
  <g transform="translate(339 1204) scale(.7063 .9333)">
    <clipPath id="slabTop"><path d="M48 70 60 60H280L400 68H1110L1160 100V222H1055V216H24Z" /></clipPath>
    <clipPath id="slabBottom"><path d="M22 216H1055V222H1160V312H893V304H18Z" /></clipPath>
    <g clipPath="url(#slabTop)">
      <rect x="0" y="50" width="1180" height="180" fill="#7c6553" />
      <g filter="url(#soft)">{BLOBS.filter((b) => b[1] < 212).map((b, i) => <ellipse key={i} cx={b[0]} cy={b[1]} rx={b[2]} ry={b[3]} fill={b[4]} />)}</g>
    </g>
    <g clipPath="url(#slabBottom)">
      <rect x="0" y="210" width="1180" height="110" fill="#65503f" />
      <g filter="url(#soft)">{BLOBS.filter((b) => b[1] >= 212).map((b, i) => <ellipse key={i} cx={b[0]} cy={b[1]} rx={b[2]} ry={b[3]} fill={b[4]} />)}</g>
    </g>
    <path d="M24 216H1160" stroke="#3d2d25" strokeWidth="2" opacity=".8" />
    <path d="M1160 100 1176 180V312H1158V222Z" fill="#7d706a" />
    <path d="M1098 72C1140 90 1160 130 1162 180" stroke="#cfb4a3" strokeWidth="7" />
    <path d="M1098 72C1130 84 1155 110 1164 160" stroke="#2c211d" strokeWidth="2.500" strokeDasharray="12 5" />
    <path d="M400 67H1165" stroke="#d8e0dd" strokeWidth="4" />
  </g>
);

const RING = "M340 1512C345 1390 358 1240 395 1115C440 960 530 825 640 735C720 665 820 612 925 614C1060 616 1160 690 1250 795C1350 915 1420 1080 1448 1240C1460 1320 1464 1420 1468 1498";

function Model() {
  return (
    <svg className="absolute left-[960px] top-[184px]" width="740" height="560" viewBox="0 0 1568 1568" preserveAspectRatio="none" fill="none">
      <defs>
        <filter id="soft" x="-5%" y="-20%" width="110%" height="140%"><feGaussianBlur stdDeviation="15" /></filter>
        <filter id="haze" x="-20%" y="-20%" width="140%" height="140%"><feGaussianBlur stdDeviation="14" /></filter>
        <clipPath id="upperMesh"><path d="M288 492 340 462 450 408 540 375 620 345 690 300 770 225 840 130 890 80H940L962 400 968 590 1000 620 330 700 318 620Z" /></clipPath>
        <clipPath id="lowerMesh"><path d="M520 742H780L860 790 990 870V1270L940 1290H640L400 1220 410 1100Z" /></clipPath>
        <clipPath id="glass"><path d="M748 130 808 62H1218L1284 132 1358 410 1330 880V1262H748Z" /></clipPath>
        <linearGradient id="slabEnd" x1="0" x2="0" y1="0" y2="1"><stop offset="0" stopColor="#7d746b" /><stop offset=".5" stopColor="#a08b7f" /><stop offset="1" stopColor="#8c7467" /></linearGradient>
      </defs>

      {/* translucent back body */}
      <path d="M748 130 808 62H1218L1284 132 1358 410 1330 880V1262H748Z" fill="#d2cfc7" />
      <g clipPath="url(#glass)">
        <path d="M748 130 808 62H1218L1284 132Z" fill="#dad5c9" />
        <g filter="url(#haze)">
          <path d="M1230 160 1360 400 1330 900H1250L1270 500Z" fill="#d7d4c5" />
          <path d="M1100 160 1200 240 1160 420 1080 560 1190 700 1240 880 1280 600 1200 400Z" fill="#cfcdc7" />
          <path d="M1000 150 1080 240 1050 330Z" fill="#cdcbc6" />
          <path d="M1160 260 1130 400 1190 460 1240 330Z" fill="#d5d2c8" />
        </g>
        <path d="M1000 340 1040 350 1074 392 1030 460 1000 475Z" fill="#d9d5c6" />
        <path d="M992 340V590" stroke="#c0beb7" strokeWidth="4" />
      </g>
      <path d="M748 130H1284" stroke="#c9c5ba" strokeWidth="2" />
      <path d="M880 800C960 640 1100 590 1162 640C1200 740 1200 900 1160 1050C1100 1130 950 1150 905 1085C875 1020 870 900 880 800Z" fill="#fff" />
      <path d="M985 534C1060 520 1130 570 1160 650L1085 636 990 610Z" fill="#a9a79f" />

      {/* far side of the mesh */}
      <g clipPath="url(#lowerMesh)" stroke="#9b9f9d" strokeWidth="13">
        {[[660, 840], [635, 895], [590, 930], [640, 990], [710, 940], [720, 1040], [600, 1080], [680, 1140], [750, 1170], [610, 1190]].map(([x, y]) => (
          <path key={x + "," + y} d={flat(x, y, 38, 50)} />
        ))}
        <path d="M820 990V1260H790V1010Z" fill="#8e9492" stroke="none" opacity=".75" />
        <path d="M745 750V840M845 1080V1250M880 800V1080" stroke="#b5b6b1" strokeWidth="9" />
        <path d="M425 1080 445 1180 490 1262" strokeWidth="24" />
      </g>
      <g stroke="#999d9b" strokeWidth="12">
        <path d="M293 500 308 590 330 670M310 480 322 590 350 650" />
        <path d="M505 480 530 550M455 545 480 570" stroke="#b0aa9c" strokeWidth="16" />
      </g>

      {/* near side of the mesh */}
      <g clipPath="url(#upperMesh)" stroke="#4d4d47" strokeWidth="20">
        {UPPER.map(([x, y]) => <path key={x + "," + y} d={pointy(x, y)} />)}
        {[[520, 394, 43], [455, 454, 43], [389, 510, 43], [345, 549, 26], [455, 570, 43], [392, 628, 43], [345, 662, 26]].map(([x, y, w]) => (
          <path key={x + "," + y} d={flat(x, y, w, 58)} />
        ))}
      </g>
      <path d="M290 490 330 462 440 412 530 378 620 348 690 300 765 232 835 135 890 80" stroke="#8f9391" strokeWidth="7" strokeDasharray="16 7 5 9 22 10" />
      <path d="M880 82H958" stroke="#a9b4b4" strokeWidth="6" />
      <path d="M938 88 960 82 988 165 992 600 966 590 958 400Z" fill="#a6a9a7" />
      <path d="M955 115C966 120 968 150 958 165M962 210V260M972 290V560M984 200V330" stroke="#cfcfca" strokeWidth="7" strokeDasharray="40 14" />
      <g clipPath="url(#lowerMesh)" stroke="#4d4d47">
        <g strokeWidth="22">{LOWER.map(([x, y]) => <path key={x + "," + y} d={pointy(x, y)} />)}</g>
        <g strokeWidth="16">
          {[[566, 860], [571, 967], [516, 915], [524, 1024], [580, 1075], [478, 970], [484, 1078], [538, 1133], [594, 1183], [498, 1187], [550, 1240], [606, 1290], [452, 1130], [446, 1020]].map(([x, y]) => (
            <path key={x + "," + y} d={flat(x, y, 36, 54, 8)} />
          ))}
        </g>
      </g>

      {/* slab */}
      <path d="M1462 1292C1490 1305 1508 1330 1509 1365V1472H1462Z" fill="url(#slabEnd)" />
      <Marble />
      <g fill="#4d4d47">
        {[682, 766, 850, 938].map((x) => (
          <path key={x} d={`M${x - 32} 1238L${x} 1258 ${x + 32} 1238V1254L${x + 13} 1268V1286H${x - 13}V1268L${x - 32} 1254Z`} />
        ))}
        <path d="M570 1262H625L646 1294 620 1276H590L576 1292ZM490 1250H530L548 1278 500 1266Z" />
      </g>
      <path d="M690 1296H745M775 1296H830M865 1296H915M945 1294H988M635 1297H660" stroke="#4d4d47" strokeWidth="7" />

      {/* arch */}
      <Ruled rows={INNER_SHELL} />
      <path d="M1070 985 1330 930M1010 890 1240 815M1085 1035 1370 990M1120 1130 1410 1085" stroke="#7d7a73" strokeWidth="1.500" opacity=".5" />
      <Ruled rows={OUTER_SHELL} />
      <g strokeWidth="2.500">
        <path d="M300 708 560 788" stroke="#86655a" opacity=".7" />
        <path d="M470 560 655 655" stroke="#86655a" strokeDasharray="9 7" opacity=".7" />
        <path d="M400 625 640 735" stroke="#c2b9a6" strokeWidth="6" />
        <path d="M205 850 478 912" stroke="#7f7566" />
        <path d="M160 938 428 1004" stroke="#8f665e" strokeWidth="8" opacity=".6" />
        <path d="M600 520 800 632M680 512 850 600" stroke="#8d7a63" strokeDasharray="8 8" opacity=".6" />
      </g>
      <path d={RING} stroke="#cfcbbd" strokeWidth="22" />
      <path d={RING} stroke="#fffdf5" strokeWidth="9" strokeDasharray="5 4" opacity=".75" />
      <path d={RING} stroke="#b79f80" strokeWidth="3" strokeDasharray="6 9" transform="translate(-5 -7)" />
      <path d={RING} stroke="#8d9390" strokeWidth="2" strokeDasharray="7 12" transform="translate(4 6)" />
      <path d="M328 1390V1516H352V1400Z" fill="#cbc8ba" />
      <path d="M1458 1380V1500H1478V1400Z" fill="#cbc8ba" />
    </svg>
  );
}

const SLOTS = [
  [549, 10, 0],
  [592, 11, 0],
  [648, 8, -2],
  [697, 8, 0],
  [725, 4, 12],
];
const BAYS = [[76, 312], [374, 608], [677, 906], [973, 1208], [1275, 1446]];

function Stand() {
  return (
    <svg className="absolute left-[960px] top-[694px]" width="740" height="560" viewBox="0 0 1568 1568" preserveAspectRatio="none" fill="none">
      <defs>
        <linearGradient id="post" x1="522" x2="738" y1="0" y2="0" gradientUnits="userSpaceOnUse">
          <stop offset="0" stopColor="#bcc2bd" />
          <stop offset=".12" stopColor="#c4c6be" />
          <stop offset=".22" stopColor="#b2b8b4" />
          <stop offset=".3" stopColor="#9d9b92" />
          <stop offset=".38" stopColor="#b2ada2" />
          <stop offset=".44" stopColor="#a8a8a2" />
          <stop offset=".55" stopColor="#b9b8b1" />
          <stop offset=".75" stopColor="#b0ada1" />
          <stop offset=".82" stopColor="#a9aaa4" />
          <stop offset=".9" stopColor="#b8b6a8" />
          <stop offset="1" stopColor="#d3d2c8" />
        </linearGradient>
      </defs>
      <path
        d="M195 1470 290 1464 380 1461 470 1450H760L850 1456H1502L1415 1467H1330L1230 1474 1390 1479 1465 1486 1370 1490H1160L1060 1496H660L560 1500H130L200 1492H480L600 1482H340L430 1473Z"
        fill="#cbcbcb"
      />
      <path d="M425 1468H860L880 1473H440Z" fill="#fff" />
      <path d="M522 62H738V1450H722V1462H522Z" fill="url(#post)" />
      {BAYS.map(([a, b], r) =>
        SLOTS.map(([x, w, d]) => <rect key={r + "-" + x} x={x} y={a + d} width={w} height={b - a - (d > 0 ? 20 : 0)} fill="#fff" />)
      )}
      {[340, 638, 938, 1238].map((y) => (
        <g key={y}>
          <path d={`M540 ${y + 34}C542 ${y + 6} 558 ${y + 6} 563 ${y + 32}C556 ${y + 22} 546 ${y + 22} 540 ${y + 34}Z`} fill="#85847d" />
          <path d={`M576 ${y + 38}C579 ${y + 6} 604 ${y + 6} 612 ${y + 38}C604 ${y + 24} 584 ${y + 24} 576 ${y + 38}Z`} fill="#7b7972" />
          <path d={`M630 ${y + 30}C634 ${y + 16} 652 ${y + 16} 660 ${y + 28}`} stroke="#98978f" strokeWidth="4" />
          <path d={`M626 ${y - 24}C632 ${y + 2} 658 ${y + 2} 664 ${y - 24}L656 ${y - 18}H634Z`} fill="#a5a094" stroke="#8e897e" strokeWidth="2" />
          <path d={`M678 ${y - 28}C684 ${y + 2} 706 ${y + 2} 712 ${y - 26}`} stroke="#d2d2cc" strokeWidth="4" />
          <path d={`M688 ${y - 12}H702`} stroke="#a2a19a" strokeWidth="4" />
          <path d={`M578 ${y - 26}C584 ${y} 602 ${y} 606 ${y - 24}L592 ${y - 16}Z`} fill="#a39d8b" stroke="#c2beae" strokeWidth="2" />
          <path d={`M540 ${y - 24}C544 ${y - 4} 556 ${y - 4} 562 ${y - 24}`} stroke="#a4a7a0" strokeWidth="3" />
          <path d={`M572 ${y - 8}H618V${y + 12}H572Z`} fill="#98978f" opacity=".5" />
        </g>
      ))}
      <path d="M577 80C580 64 605 64 611 80M541 76C544 64 557 64 562 76M630 76C634 64 654 64 660 76" stroke="#8d8c85" strokeWidth="4" />
      <path d="M541 1444H560V1462H541ZM586 1444H603V1462H586ZM636 1444H657V1462H636ZM686 1444H704V1462H686Z" fill="#fff" />
    </svg>
  );
}

function ViewCube() {
  return (
    <svg className="absolute left-[2640px] top-[14px]" width="214" height="194" viewBox="600 720 642 582" fill="none">
      <defs>
        <filter id="cubeShadow" x="-20%" y="-60%" width="140%" height="220%"><feGaussianBlur stdDeviation="12" /></filter>
        <filter id="cubeSoft"><feGaussianBlur stdDeviation="2.500" /></filter>
        <linearGradient id="face" x1="0" x2="0" y1="0" y2="1"><stop offset="0" stopColor="#f1f1f1" /><stop offset="1" stopColor="#dadada" /></linearGradient>
      </defs>
      <path d="M690 1232 1030 1205 1160 1215 1090 1250 960 1256Z" fill="#999" opacity=".75" filter="url(#cubeShadow)" />
      <g filter="url(#cubeSoft)">
        <path d="M740 908 1038 900V1224L742 1208Z" fill="url(#face)" />
        <path d="M1038 900 1103 926 1101 1190 1038 1224Z" fill="#e4e4e4" />
        <path d="M742 908 1038 900 1103 926 1101 1190M741 910 742 1208 960 1222" stroke="#c4c4c4" strokeWidth="4" strokeDasharray="52 26" />
        <path d="M793 966 977 961V1163L793 1158Z" fill="#dcdde0" />
        <text x="886" y="1090" textAnchor="middle" textLength="138" lengthAdjust="spacingAndGlyphs" fontSize="86" fontWeight="700" fill="#9fa1a5">LEFT</text>
        <path d="M1070 1036C1078 1030 1090 1032 1091 1036V1086C1080 1090 1068 1082 1068 1060Z" fill="#97999d" />
        <path d="M1050 1040 1062 1080" stroke="#b5b7ba" strokeWidth="8" />
        <path d="M697 1218 1036 1231" stroke="#7bdc7b" strokeWidth="12" />
        <path d="M697 1218H800" stroke="#9dfb9d" strokeWidth="11" />
        <path d="M1040 1231 1110 1200" stroke="#f08080" strokeWidth="12" />
        <path d="M1038 846V1232" stroke="#7273ec" strokeWidth="12" />
        <text x="1038" y="828" textAnchor="middle" fontSize="90" fontWeight="700" fill="#9b9bff">Z</text>
        <text x="657" y="1241" textAnchor="middle" textLength="42" lengthAdjust="spacingAndGlyphs" fontSize="88" fontWeight="700" fill="#9dfb9d">Y</text>
        <text x="1121" y="1216" textAnchor="middle" textLength="40" lengthAdjust="spacingAndGlyphs" fontSize="86" fontWeight="700" fill="#ff9d9d">X</text>
      </g>
    </svg>
  );
}

/* ---------- navigation bar ---------- */

const INK = "#3a3d47";

function NavBar() {
  return (
    <div className="relative mb-3 ml-[581px] flex h-12 w-[506px] items-center bg-[#f1f1f1] pl-2">
      <Svg w={30} h={32}>
        <path d="M8 13C-4 16 0 23 14 23C30 23 32 16 20 13" stroke={INK} strokeWidth="1.800" />
        <path d="M12 31V9H8L15 1 22 9H18V31Z" fill="#e9ebf0" stroke={INK} strokeWidth="1.500" strokeLinejoin="round" />
        <path d="M11 17V26L4 22Z" fill="#222" />
      </Svg>
      <Caret className="ml-[10px]" />
      <Svg w={28} h={30} className="ml-[14px]">
        <path d="M1 11 9 1V8L21 3V11Z" fill="#b9bec9" stroke={INK} strokeWidth="1.400" />
        <path d="M1 10H27V28H1Z" fill="#fff" stroke={INK} strokeWidth="1.600" />
        <path d="M4.500 14.500H23.500V24H4.500Z" fill="#a9adb8" stroke={INK} strokeWidth="1.400" />
      </Svg>
      <Svg w={30} h={33} className="ml-[23px]">
        <path d="M11 31C9 26 6 24 1 18C0 15 4 15 6 18L9 20 6 7C6 4 9 4 10 7L12 14V3C12 0 16 0 16 3V14L18 3C19 0 22 1 22 4L21 15 25 8C27 6 30 8 29 10L26 20C26 26 24 27 23 31Z" fill="#fff" stroke={INK} strokeWidth="1.400" strokeLinejoin="round" />
      </Svg>
      <Svg w={31} h={32} className="ml-[22px]">
        <circle cx="11.500" cy="12" r="10.500" fill="#e3eeee" stroke={INK} strokeWidth="1.600" />
        <path d="M5 9C6 6 9 4 12 4" stroke="#fff" strokeWidth="2.500" />
        <path d="M19 20 29 30" stroke={INK} strokeWidth="4.500" />
        <path d="M23 5H30M26.500 1V9M23 11H30" stroke={INK} strokeWidth="1.600" />
      </Svg>
      <Svg w={31} h={34} className="ml-[21px]">
        <path d="M1 2H30V32H1Z" stroke="#8a8a8a" strokeWidth="1.500" strokeDasharray="7 3" />
        <circle cx="12" cy="13" r="10.500" fill="#e3eeee" stroke={INK} strokeWidth="1.600" />
        <path d="M6 10C7 7 10 5 13 5" stroke="#fff" strokeWidth="2.500" />
        <path d="M20 21 29 31" stroke="#333" strokeWidth="4.500" />
      </Svg>
      <Caret className="ml-[10px]" />
      <Svg w={30} h={32} className="ml-[28px]">
        <path d="M1 1H29V25H1Z" fill="#fff" stroke={INK} strokeWidth="1.600" />
        <path d="M4 4H26V21.500H4Z" fill="#93b5de" stroke="#2d4a73" strokeWidth="1.600" />
        <path d="M12 25V29H7V31H23V29H18V25Z" fill="#dfe2e8" stroke={INK} strokeWidth="1.200" />
      </Svg>
      <Caret className="ml-[5px]" />
      <Svg w={30} h={31} className="ml-[15px]">
        <path d="M1 1H29V30H1Z" fill="#fff" />
        <path d="M1 15H29V30H1Z" fill="#d5d9e2" />
        <path d="M5 1V30M9 1V30M13 1V30M17 1V30M21 1V30M25 1V30M1 5H29M1 9H29M1 13H29M1 17H29M1 21H29M1 25H29" stroke="#777b88" strokeWidth="1" />
        <path d="M1 1H29V30H1Z" stroke={INK} strokeWidth="1.600" />
      </Svg>
      <Caret className="ml-[5px]" />
      <Svg w={30} h={28} className="ml-[15px]">
        <path d="M1 1H29V27H1Z" fill="#a9c3e6" stroke="#2d4a73" strokeWidth="1.700" />
        <path d="M15 1V27M1 14H29" stroke="#2d4a73" strokeWidth="1.700" />
        <path d="M4 4H12V11H4ZM18 4H26V11H18ZM4 17H12V24H4ZM18 17H26V24H18Z" stroke="#6f8fbd" strokeWidth="1.200" />
      </Svg>
      <Caret className="ml-[5px]" />
    </div>
  );
}

/* ---------- timeline ---------- */

const STEPS = [
  SketchEdit, Extrude, Extrude, Extrude, Extrude, Revolve, Extrude, Extrude, Fillet, Hole, Chamfer, Shell, Draft, Hole, Chamfer,
  Fillet, Fillet, Fillet, OffsetFaces, Fillet, Fillet, Fillet, Fillet, Fillet, Fillet, Hole, Hole,
];

const PLAY = [
  "M12 2h4v28h-4zM36 2v28L17 16Z",
  "M30 3v26L11 16ZM32 9h4v13h-4z",
  "M12 0 35 16 12 32Z",
  "M10 9h4v13h-4zM16 3 35 16 16 29Z",
  "M12 2 32 16 12 30ZM32 2h4v28h-4z",
];

function Timeline() {
  return (
    <div className="flex h-[100px] shrink-0 border-t-2 border-[#cccccc] bg-[#f1f1f1]">
      <div className="flex w-[290px] pl-2 pt-8">
        {PLAY.map((d) => (
          <Svg key={d} w={50} h={32}>
            <path d={d} fill="#4c4c4e" />
          </Svg>
        ))}
      </div>
      <div className="flex w-[1276px] flex-col pt-[30px]">
        <div className="flex gap-4">
          {STEPS.map((I, i) => (
            <div key={i} className="flex w-8 shrink-0 flex-col">
              <Svg w={32} h={32} vb="0 0 64 64">
                <I />
              </Svg>
              <div className={"mt-[6px] h-[10px] w-1 bg-[#cccccc] " + (i === 0 ? "ml-4" : "ml-[14px]")} />
            </div>
          ))}
        </div>
        <div className="ml-4 h-1 w-[1250px] bg-[#cccccc]" />
      </div>
      <Svg w={24} h={64} className="mt-[18px]">
        <path d="M0 0H24V10L14 18V64H10V18L0 10Z" fill={DARK} />
      </Svg>
      <div className="ml-[1229px] mt-[32px]">
        <Gear size={33} />
      </div>
    </div>
  );
}

export default function App() {
  return (
    <div className="flex h-[1798px] w-[2878px] flex-col overflow-hidden bg-white text-[#3c3c3c]" style={{ fontFamily: '"Noto Sans", "Open Sans", sans-serif' }}>
      <TitleBar />
      <Ribbon />
      <main className="relative flex min-h-0 flex-1 flex-col justify-between bg-white">
        <Stand />
        <Model />
        <ViewCube />
        <Browser />
        <div className="flex items-end">
          <div className="relative mb-2 ml-[6px]">
            <PanelBar title="COMMENTS" track="tracking-[0px]" plus />
          </div>
          <NavBar />
        </div>
      </main>
      <Timeline />
    </div>
  );
}
